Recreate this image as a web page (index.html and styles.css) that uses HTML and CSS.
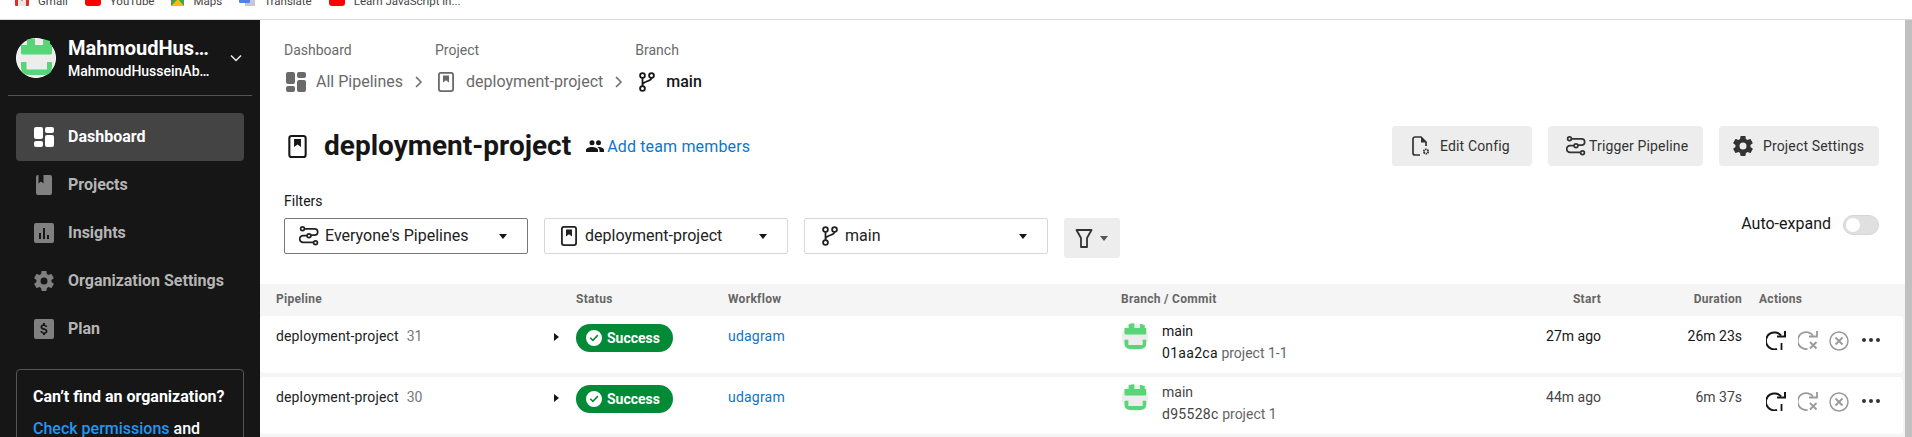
FILE: index.html
```html
<!DOCTYPE html>
<html lang="en">
<head>
  <meta charset="UTF-8">
  <meta name="viewport" content="width=device-width, initial-scale=1.0">
  <title>deployment-project - CircleCI</title>
  <link rel="stylesheet" href="styles.css">
</head>
<body>
  <svg class="defs" width="0" height="0">
    <symbol id="i-dash" viewBox="0 0 20 20"><rect x="0" y="0" width="9" height="12" rx="2"/><rect x="0" y="14" width="9" height="6" rx="2"/><rect x="11" y="0" width="9" height="6" rx="2"/><rect x="11" y="8" width="9" height="12" rx="2"/></symbol>
    <symbol id="i-project" viewBox="0 0 16 20"><rect x=".9" y=".9" width="14.200" height="18.200" rx="2" fill="none" stroke="currentColor" stroke-width="1.800"/><path d="M5 3.500h6v7L8 8.300 5 10.500z"/></symbol>
    <symbol id="i-project-solid" viewBox="0 0 16 20"><path fill-rule="evenodd" d="M2 0h.5v8.500L5 6.500l2.500 2V0H14a2 2 0 0 1 2 2v16a2 2 0 0 1-2 2H2a2 2 0 0 1-2-2V2a2 2 0 0 1 2-2z"/></symbol>
    <symbol id="i-insights" viewBox="0 0 20 20"><path fill-rule="evenodd" d="M2 0h16a2 2 0 0 1 2 2v16a2 2 0 0 1-2 2H2a2 2 0 0 1-2-2V2a2 2 0 0 1 2-2zm3 10v6h2v-6zm4-5v11h2V5zm4 7v4h2v-4z"/></symbol>
    <symbol id="i-plan" viewBox="0 0 20 20"><path fill-rule="evenodd" d="M2 0h16a2 2 0 0 1 2 2v16a2 2 0 0 1-2 2H2a2 2 0 0 1-2-2V2a2 2 0 0 1 2-2zm7 4v1.300C7.500 5.700 6.500 6.700 6.500 8c0 1.700 1.300 2.400 3.300 2.900 1.500.4 1.900.8 1.900 1.400 0 .5-.4 1.100-1.700 1.100-1.200 0-1.700-.6-1.800-1.300H6.400c.1 1.500 1.200 2.300 2.600 2.600V16h2v-1.300c1.400-.3 2.500-1.100 2.500-2.500 0-1.900-1.600-2.500-3.200-3-1.600-.4-2-.8-2-1.300 0-.6.500-1 1.600-1 1.100 0 1.500.5 1.600 1.200h1.800c-.1-1.100-.8-2-2.300-2.400V4z"/></symbol>
    <symbol id="i-gear" viewBox="2 2 20 20"><path fill-rule="evenodd" d="M19.400 13c.1-.3.1-.7.100-1s0-.7-.1-1l2.100-1.600c.2-.2.200-.4.100-.6l-2-3.500c-.1-.2-.4-.3-.6-.2l-2.500 1c-.5-.4-1.100-.7-1.700-1L14.500 2.400c0-.2-.2-.4-.5-.4h-4c-.2 0-.4.200-.5.400L9.100 5.100c-.6.300-1.200.6-1.700 1l-2.500-1c-.2-.1-.5 0-.6.200l-2 3.500c-.1.200-.1.500.1.600L4.500 11c0 .3-.1.700-.1 1s0 .7.1 1l-2.100 1.600c-.2.200-.2.400-.1.600l2 3.500c.1.200.4.300.6.200l2.500-1c.5.400 1.100.7 1.700 1l.4 2.700c0 .2.200.4.500.4h4c.2 0 .4-.2.500-.4l.4-2.700c.6-.3 1.200-.6 1.700-1l2.500 1c.2.100.5 0 .6-.2l2-3.500c.1-.2.100-.5-.1-.6zM12 15.500a3.500 3.500 0 1 1 0-7 3.500 3.500 0 0 1 0 7z"/></symbol>
    <symbol id="i-branch" viewBox="0 0 16 20"><g fill="none" stroke="currentColor" stroke-width="1.800"><circle cx="3.500" cy="3.500" r="2.400"/><circle cx="3.500" cy="16.500" r="2.400"/><circle cx="12.500" cy="3.500" r="2.400"/><path d="M3.500 6v8M12.500 6c0 3.500-9 3-9 7"/></g></symbol>
    <symbol id="i-workflow" viewBox="0 0 20 20"><g fill="none" stroke="currentColor" stroke-width="1.700"><circle cx="3.500" cy="2.800" r="1.900"/><path d="M5.500 2.800h10a3.200 3.200 0 0 1 0 6.400h-3.500"/><circle cx="10" cy="9.700" r="1.900"/><path d="M8 9.700H4a3.300 3.300 0 0 0 0 6.600h10"/><circle cx="16.500" cy="16.800" r="1.900"/></g></symbol>
    <symbol id="i-logo" viewBox="0 0 40 40"><circle cx="20" cy="20" r="19.500" fill="#ededed" stroke="#fff"/><path fill="#56d677" d="M11 1.500q4-1 8-1V7h8V1l7 2v4h2v7q0 2-1 2.500H6q-1-.5-1-2.500V7h6zM5 24h5.500v7.500h20.500V24h5v5q0 8-8 8H13q-8 0-8-8z"/></symbol>
    <symbol id="i-rerun" viewBox="0 0 20 19"><g fill="none" stroke="currentColor" stroke-width="2"><path d="M15 4.500A8.500 8.500 0 1 0 11 18"/><path d="M11 5.500h8V0"/><path d="M15.500 12v7" stroke-width="1.800"/></g></symbol>
    <symbol id="i-rerun-x" viewBox="0 0 20 19"><g fill="none" stroke="currentColor" stroke-width="1.800"><path d="M15 4.500A8.500 8.500 0 1 0 9.500 18"/><path d="M11 5.500h8V0"/><path d="M12 11l6.500 6.500M18.500 11L12 17.500"/></g></symbol>
    <symbol id="i-cancel" viewBox="0 0 20 20"><g fill="none" stroke="currentColor" stroke-width="1.500"><circle cx="10" cy="10" r="9"/><path d="M6.500 6.500l7 7M13.500 6.500l-7 7" stroke-width="1.800"/></g></symbol>
    <symbol id="i-config" viewBox="0 0 18 20"><g fill="none" stroke="currentColor" stroke-width="1.700"><path d="M8 19H3a2 2 0 0 1-2-2V3a2 2 0 0 1 2-2h6l5 5v4"/></g><path fill="currentColor" d="M9 1l5.500 5.500H9z"/><circle cx="14" cy="15.500" r="2.200" fill="none" stroke="currentColor" stroke-width="1.800" stroke-dasharray="1.500 .6"/></symbol>
    <symbol id="i-team" viewBox="0 0 18 12"><path d="M6 5.200a2.500 2.500 0 1 0 0-5 2.500 2.500 0 0 0 0 5zm6.500 0a2.500 2.500 0 1 0 0-5 2.500 2.500 0 0 0 0 5zM6 7c-2.500 0-6 1.200-6 3v2h12v-2c0-1.800-3.500-3-6-3zm6.500 0h-1.200c1.200.8 2.200 1.800 2.200 3v2H18v-2c0-1.800-3-3-5.500-3z"/></symbol>
    <symbol id="i-filter" viewBox="0 0 18 19"><path fill="none" stroke="currentColor" stroke-width="1.800" stroke-linejoin="round" d="M1.500 1h15l-4.500 8v9H6V9z"/></symbol>
    <symbol id="i-success" viewBox="0 0 16 16"><path fill="#fff" fill-rule="evenodd" d="M8 0a8 8 0 1 1 0 16A8 8 0 0 1 8 0zm3.300 4.600L6.900 9.200 4.800 7.200 3.700 8.300l3.200 3.200 5.500-5.800z"/></symbol>
    <symbol id="i-gmail" viewBox="0 0 14 14"><rect width="14" height="14" rx="1" fill="#e8e8e8"/><path fill="#d93025" d="M0 0h3v14H1a1 1 0 0 1-1-1zM11 0h3v13a1 1 0 0 1-1 1h-2z"/><path fill="#d93025" d="M3 2l4 4 4-4v3L7 9 3 5z"/></symbol>
    <symbol id="i-yt" viewBox="0 0 16 14"><rect width="16" height="14" rx="3" fill="#f00"/><path fill="#fff" d="M6 1l5 3.500L6 8z"/></symbol>
    <symbol id="i-maps" viewBox="0 0 13 14"><path fill="#34a853" d="M0 2h13v12H0z"/><path fill="#fbbc04" d="M0 14l7-7 6 7z"/><path fill="#4285f4" d="M6 7l7-5v6z"/><path fill="#ea4335" d="M0 0h6v5L0 10z"/></symbol>
    <symbol id="i-translate" viewBox="0 0 16 14"><rect x="6" y="2" width="10" height="12" fill="#c9c9c9"/><rect width="11" height="11" rx="1" fill="#4a86e8"/><path fill="#fff" d="M3 4h5v1.500H3z"/></symbol>
  </svg>

  <div class="bookmarks">
    <span class="mark"><svg class="fav-gmail"><use href="#i-gmail"/></svg>Gmail</span>
    <span class="mark"><svg class="fav-yt"><use href="#i-yt"/></svg>YouTube</span>
    <span class="mark"><svg class="fav-maps"><use href="#i-maps"/></svg>Maps</span>
    <span class="mark"><svg class="fav-tr"><use href="#i-translate"/></svg>Translate</span>
    <span class="mark"><svg class="fav-yt"><use href="#i-yt"/></svg>Learn JavaScript in...</span>
  </div>

  <div class="app">
    <aside class="sidebar">
      <div class="org">
        <svg class="org-logo"><use href="#i-logo"/></svg>
        <div class="org-names">
          <div class="org-name">MahmoudHus…</div>
          <div class="org-user">MahmoudHusseinAb…</div>
        </div>
        <svg class="org-caret" viewBox="0 0 12 8"><path d="M1 1.500l5 5 5-5" fill="none" stroke="currentColor" stroke-width="1.500"/></svg>
      </div>
      <nav class="nav">
        <a class="nav-item active"><svg class="nav-icon"><use href="#i-dash"/></svg>Dashboard</a>
        <a class="nav-item"><svg class="nav-icon"><use href="#i-project-solid"/></svg>Projects</a>
        <a class="nav-item"><svg class="nav-icon"><use href="#i-insights"/></svg>Insights</a>
        <a class="nav-item"><svg class="nav-icon"><use href="#i-gear"/></svg>Organization Settings</a>
        <a class="nav-item"><svg class="nav-icon"><use href="#i-plan"/></svg>Plan</a>
      </nav>
      <div class="org-help">
        <div class="help-title">Can’t find an organization?</div>
        <div class="help-text"><a>Check permissions</a> and</div>
      </div>
    </aside>

    <main class="content">
      <div class="crumbs">
        <div class="crumb">
          <div class="crumb-label">Dashboard</div>
          <div class="crumb-value"><svg class="crumb-dash"><use href="#i-dash"/></svg><span class="crumb-text">All Pipelines</span><svg class="crumb-sep" viewBox="0 0 8 12"><path d="M1 1l5 5-5 5" fill="none" stroke="currentColor" stroke-width="1.500"/></svg></div>
        </div>
        <div class="crumb">
          <div class="crumb-label">Project</div>
          <div class="crumb-value"><svg class="crumb-proj"><use href="#i-project"/></svg><span class="crumb-text">deployment-project</span><svg class="crumb-sep" viewBox="0 0 8 12"><path d="M1 1l5 5-5 5" fill="none" stroke="currentColor" stroke-width="1.500"/></svg></div>
        </div>
        <div class="crumb">
          <div class="crumb-label">Branch</div>
          <div class="crumb-value"><svg class="crumb-branch"><use href="#i-branch"/></svg><span class="crumb-main">main</span></div>
        </div>
      </div>

      <div class="title-row">
        <svg class="title-icon"><use href="#i-project"/></svg>
        <h1>deployment-project</h1>
        <a class="team"><svg class="team-icon"><use href="#i-team"/></svg>Add team members</a>
        <div class="actions">
          <button class="btn btn-config"><svg class="btn-icon"><use href="#i-config"/></svg>Edit Config</button>
          <button class="btn btn-trigger"><svg class="btn-icon-wide"><use href="#i-workflow"/></svg>Trigger Pipeline</button>
          <button class="btn btn-settings"><svg class="btn-icon-wide"><use href="#i-gear"/></svg>Project Settings</button>
        </div>
      </div>

      <div class="filters-label">Filters</div>
      <div class="filters">
        <div class="select select-wf focus"><svg class="sel-icon"><use href="#i-workflow"/></svg><span>Everyone's Pipelines</span><i class="tri"></i></div>
        <div class="select select-proj"><svg class="sel-icon-proj"><use href="#i-project"/></svg><span>deployment-project</span><i class="tri"></i></div>
        <div class="select select-branch"><svg class="sel-icon-branch"><use href="#i-branch"/></svg><span>main</span><i class="tri"></i></div>
        <button class="filter-btn"><svg class="filter-icon"><use href="#i-filter"/></svg><i class="tri"></i></button>
        <div class="auto-expand">Auto-expand<span class="toggle"><i></i></span></div>
      </div>

      <div class="table-head row-grid">
        <div>Pipeline</div><div>Status</div><div>Workflow</div><div>Branch / Commit</div><div class="right">Start</div><div class="right">Duration</div><div class="head-actions">Actions</div>
      </div>

      <div class="runs">
        <div class="run row-grid">
          <div class="cell-pipe"><span class="pipe-name">deployment-project</span><span class="num">31</span><i class="arrow"></i></div>
          <div class="cell-status"><span class="badge"><svg class="badge-icon"><use href="#i-success"/></svg>Success</span></div>
          <div class="cell-wf"><a>udagram</a></div>
          <div class="cell-commit"><svg class="avatar"><use href="#i-logo"/></svg><div><div>main</div><div class="commit"><span class="sha">01aa2ca</span> <span class="msg">project 1-1</span></div></div></div>
          <div class="right cell-time">27m ago</div>
          <div class="right cell-time">26m 23s</div>
          <div class="cell-actions"><svg class="act"><use href="#i-rerun"/></svg><svg class="act off"><use href="#i-rerun-x"/></svg><svg class="act-cancel off"><use href="#i-cancel"/></svg><span class="more"><i></i><i></i><i></i></span></div>
        </div>

        <div class="run row-grid old">
          <div class="cell-pipe"><span class="pipe-name">deployment-project</span><span class="num">30</span><i class="arrow"></i></div>
          <div class="cell-status"><span class="badge"><svg class="badge-icon"><use href="#i-success"/></svg>Success</span></div>
          <div class="cell-wf"><a>udagram</a></div>
          <div class="cell-commit"><svg class="avatar"><use href="#i-logo"/></svg><div><div>main</div><div class="commit"><span class="sha">d95528c</span> <span class="msg">project 1</span></div></div></div>
          <div class="right cell-time">44m ago</div>
          <div class="right cell-time">6m 37s</div>
          <div class="cell-actions"><svg class="act"><use href="#i-rerun"/></svg><svg class="act off"><use href="#i-rerun-x"/></svg><svg class="act-cancel off"><use href="#i-cancel"/></svg><span class="more"><i></i><i></i><i></i></span></div>
        </div>
      </div>
    </main>
    <div class="scrollbar"></div>
  </div>
</body>
</html>
```

FILE: styles.css
```css
* { box-sizing: border-box; }
html, body { margin: 0; height: 437px; overflow: hidden; }
body { font-family: Roboto, "Liberation Sans", sans-serif; background: #fff; color: #161616; font-size: 14px; }
svg { display: block; fill: currentColor; flex: none; }
.defs { position: absolute; }
button { font-family: inherit; border: 0; }

/* browser bookmarks strip, cut off by the top of the shot */
.bookmarks { height: 20px; background: #fff; border-bottom: 1px solid #d9d9d9; display: flex; padding-left: 15px; font-size: 11.500px; color: #444; overflow: hidden; }
.mark { display: flex; gap: 9px; height: 14px; margin: -6px 17px 0 0; line-height: 14px; white-space: nowrap; }
.mark svg { margin-top: -2px; height: 14px; }
.fav-gmail { width: 14px; }
.fav-yt { width: 16px; }
.fav-maps { width: 13px; }
.fav-tr { width: 16px; }

.app { display: flex; height: 417px; }

.sidebar { width: 260px; background: #161616; color: #fff; padding: 18px 16px 0; flex: none; overflow: hidden; }
.org { display: flex; align-items: center; height: 40px; margin-bottom: 35px; position: relative; }
.org-logo { width: 40px; height: 40px; }
.org-names { margin-left: 12px; flex: 1; white-space: nowrap; }
.org-name { font-size: 20px; font-weight: 700; line-height: 22px; }
.org-user { font-size: 14px; font-weight: 500; line-height: 18px; margin-top: 3px; }
.org-caret { width: 12px; height: 8px; margin-right: 2px; color: #ededed; }
.org::after { content: ""; position: absolute; left: -8px; right: -8px; bottom: -18px; height: 1px; background: #555; }
.nav-item { display: flex; align-items: center; height: 48px; padding: 0 0 2px 18px; color: #b5b5b5; font-size: 16px; font-weight: 700; border-radius: 4px; }
.nav-item.active { background: #444; color: #fff; }
.nav-icon { width: 20px; height: 20px; margin: 2px 14px 0 0; color: #808080; }
.active .nav-icon { color: #fff; }
.org-help { margin-top: 16px; height: 120px; border: 1px solid #555; border-radius: 4px; padding: 17px 16px; }
.help-title { font-size: 16px; font-weight: 700; line-height: 20px; white-space: nowrap; }
.help-text { font-size: 16px; font-weight: 500; line-height: 22px; margin-top: 11px; }
.help-text a { color: #2196f3; }

.content { flex: 1; min-width: 0; display: flex; flex-direction: column; }
.crumbs { display: flex; padding: 22px 0 0 24px; }
.crumb-label { font-size: 14px; line-height: 16px; color: #6a6a6a; }
.crumb-value { display: flex; align-items: center; height: 22px; margin-top: 13px; font-size: 16px; color: #6a6a6a; }
.crumb-text, .crumb-main { padding-bottom: 2px; }
.crumb-dash { width: 20px; height: 20px; margin: 0 10px 0 2px; }
.crumb-proj { width: 16px; height: 20px; margin: 0 12px 0 3px; }
.crumb-sep { width: 8px; height: 12px; margin: 0 12px 0 12px; }
.crumb-branch { width: 16px; height: 20px; margin: 0 11px 0 4px; color: #161616; }
.crumb-main { font-weight: 500; color: #161616; }

.title-row { display: flex; align-items: center; margin: 32px 26px 0 24px; height: 42px; }
.title-icon { width: 19px; height: 23px; margin: 0 17px 0 4px; color: #161616; }
h1 { margin: 0; font-size: 28px; font-weight: 700; line-height: 42px; }
.team { display: flex; align-items: center; margin-left: 15px; font-size: 16px; letter-spacing: .15px; color: #0e76c9; }
.team-icon { width: 18px; height: 12px; margin-right: 3px; color: #161616; }
.actions { display: flex; gap: 16px; margin-left: auto; }
.btn { display: flex; align-items: center; height: 40px; background: #ededed; border-radius: 4px; color: #333; font-size: 14px; letter-spacing: .15px; }
.btn-config { width: 140px; padding-left: 20px; }
.btn-trigger { width: 155px; padding-left: 18px; }
.btn-settings { width: 160px; padding-left: 14px; }
.btn-icon { width: 18px; height: 20px; margin-right: 10px; }
.btn-icon-wide { width: 20px; height: 20px; margin-right: 3px; }
.btn-settings .btn-icon-wide { margin-right: 10px; }

.filters-label { margin: 26px 0 0 24px; font-size: 14px; line-height: 16px; color: #161616; }
.filters { display: flex; align-items: flex-start; gap: 16px; margin: 9px 26px 0 24px; height: 40px; }
.select { display: flex; align-items: center; width: 244px; height: 36px; border: 1px solid #d8d8d8; border-radius: 2px; font-size: 16px; color: #222; position: relative; }
.select span { padding-bottom: 2px; }
.select.focus { border-color: #777; }
.select-wf { padding-left: 14px; }
.select-proj { padding-left: 16px; }
.select-branch { padding-left: 17px; }
.sel-icon { width: 20px; height: 20px; margin-right: 6px; }
.sel-icon-proj { width: 16px; height: 20px; margin-right: 8px; }
.sel-icon-branch { width: 16px; height: 20px; margin-right: 7px; }
.tri { display: block; width: 0; height: 0; border: 4px solid transparent; border-top: 5px solid #161616; border-bottom: 0; }
.select .tri { position: absolute; right: 20px; top: 15px; }
.filter-btn { display: flex; align-items: center; width: 56px; height: 40px; background: #ededed; border-radius: 4px; padding: 0 0 0 11px; color: #333; }
.filter-btn .tri { border-top-color: #555; }
.filter-icon { width: 18px; height: 19px; margin-right: 7px; }
.auto-expand { display: flex; align-items: flex-start; margin: -3px 0 0 auto; font-size: 16px; line-height: 18px; height: 20px; }
.toggle { display: block; width: 36px; height: 20px; border-radius: 10px; background: #e0e0e0; border: 1px solid #d6d6d6; margin-left: 12px; padding: 2px; }
.toggle i { display: block; width: 14px; height: 14px; border-radius: 50%; background: #fff; }

.row-grid { display: grid; grid-template-columns: 300px 152px 393px 380px 100px 141px 1fr; }
.table-head { height: 32px; margin-top: 26px; background: #f5f5f5; padding: 0 0 2px 16px; align-items: center; font-size: 12px; font-weight: 700; color: #666; letter-spacing: .3px; }
.right { text-align: right; }
.head-actions { padding-left: 17px; }
.runs { flex: 1; background: #f5f5f5; display: flex; flex-direction: column; gap: 4px; }
.run { height: 57px; margin-right: 2px; padding-left: 16px; background: #fff; border-radius: 4px; flex: none; }
.cell-pipe { display: flex; align-items: flex-start; position: relative; line-height: 16px; padding-top: 12px; color: #222; }
.pipe-name { letter-spacing: .14px; }
.num { color: #777; margin-left: 8px; }
.arrow { position: absolute; left: 278px; top: 17px; width: 0; height: 0; border: 4.500px solid transparent; border-left: 5px solid #161616; border-right: 0; }
.cell-status { padding-top: 8px; }
.badge { display: inline-flex; align-items: center; height: 28px; width: 97px; padding-left: 10px; background: #028a37; border-radius: 14px; color: #fff; font-weight: 700; font-size: 14px; }
.badge-icon { width: 16px; height: 16px; margin-right: 5px; }
.cell-wf { padding-top: 12px; line-height: 16px; }
.cell-wf a { color: #0e76c9; letter-spacing: .2px; }
.cell-commit { display: flex; line-height: 16px; color: #161616; padding-top: 7px; }
.avatar { width: 28px; height: 28px; margin-right: 13px; }
.commit { margin-top: 6px; white-space: nowrap; }
.sha { letter-spacing: .3px; }
.msg { color: #666; }
.cell-time { padding-top: 12px; line-height: 16px; color: #161616; }
.old .cell-commit, .old .cell-time { color: #444; }
.cell-actions { display: flex; align-items: flex-start; padding: 15px 0 0 24px; }
.act { width: 20px; height: 19px; margin-right: 12px; color: #161616; }
.act.off { margin-right: 11px; }
.act.off, .act-cancel.off { color: #9a9a9a; }
.act-cancel { width: 20px; height: 20px; margin-right: 13px; }
.more { display: flex; gap: 3px; margin-top: 7px; }
.more i { display: block; width: 4px; height: 4px; border-radius: 50%; background: #333; }
.scrollbar { width: 7px; background: #c0c0c0; flex: none; }
```
